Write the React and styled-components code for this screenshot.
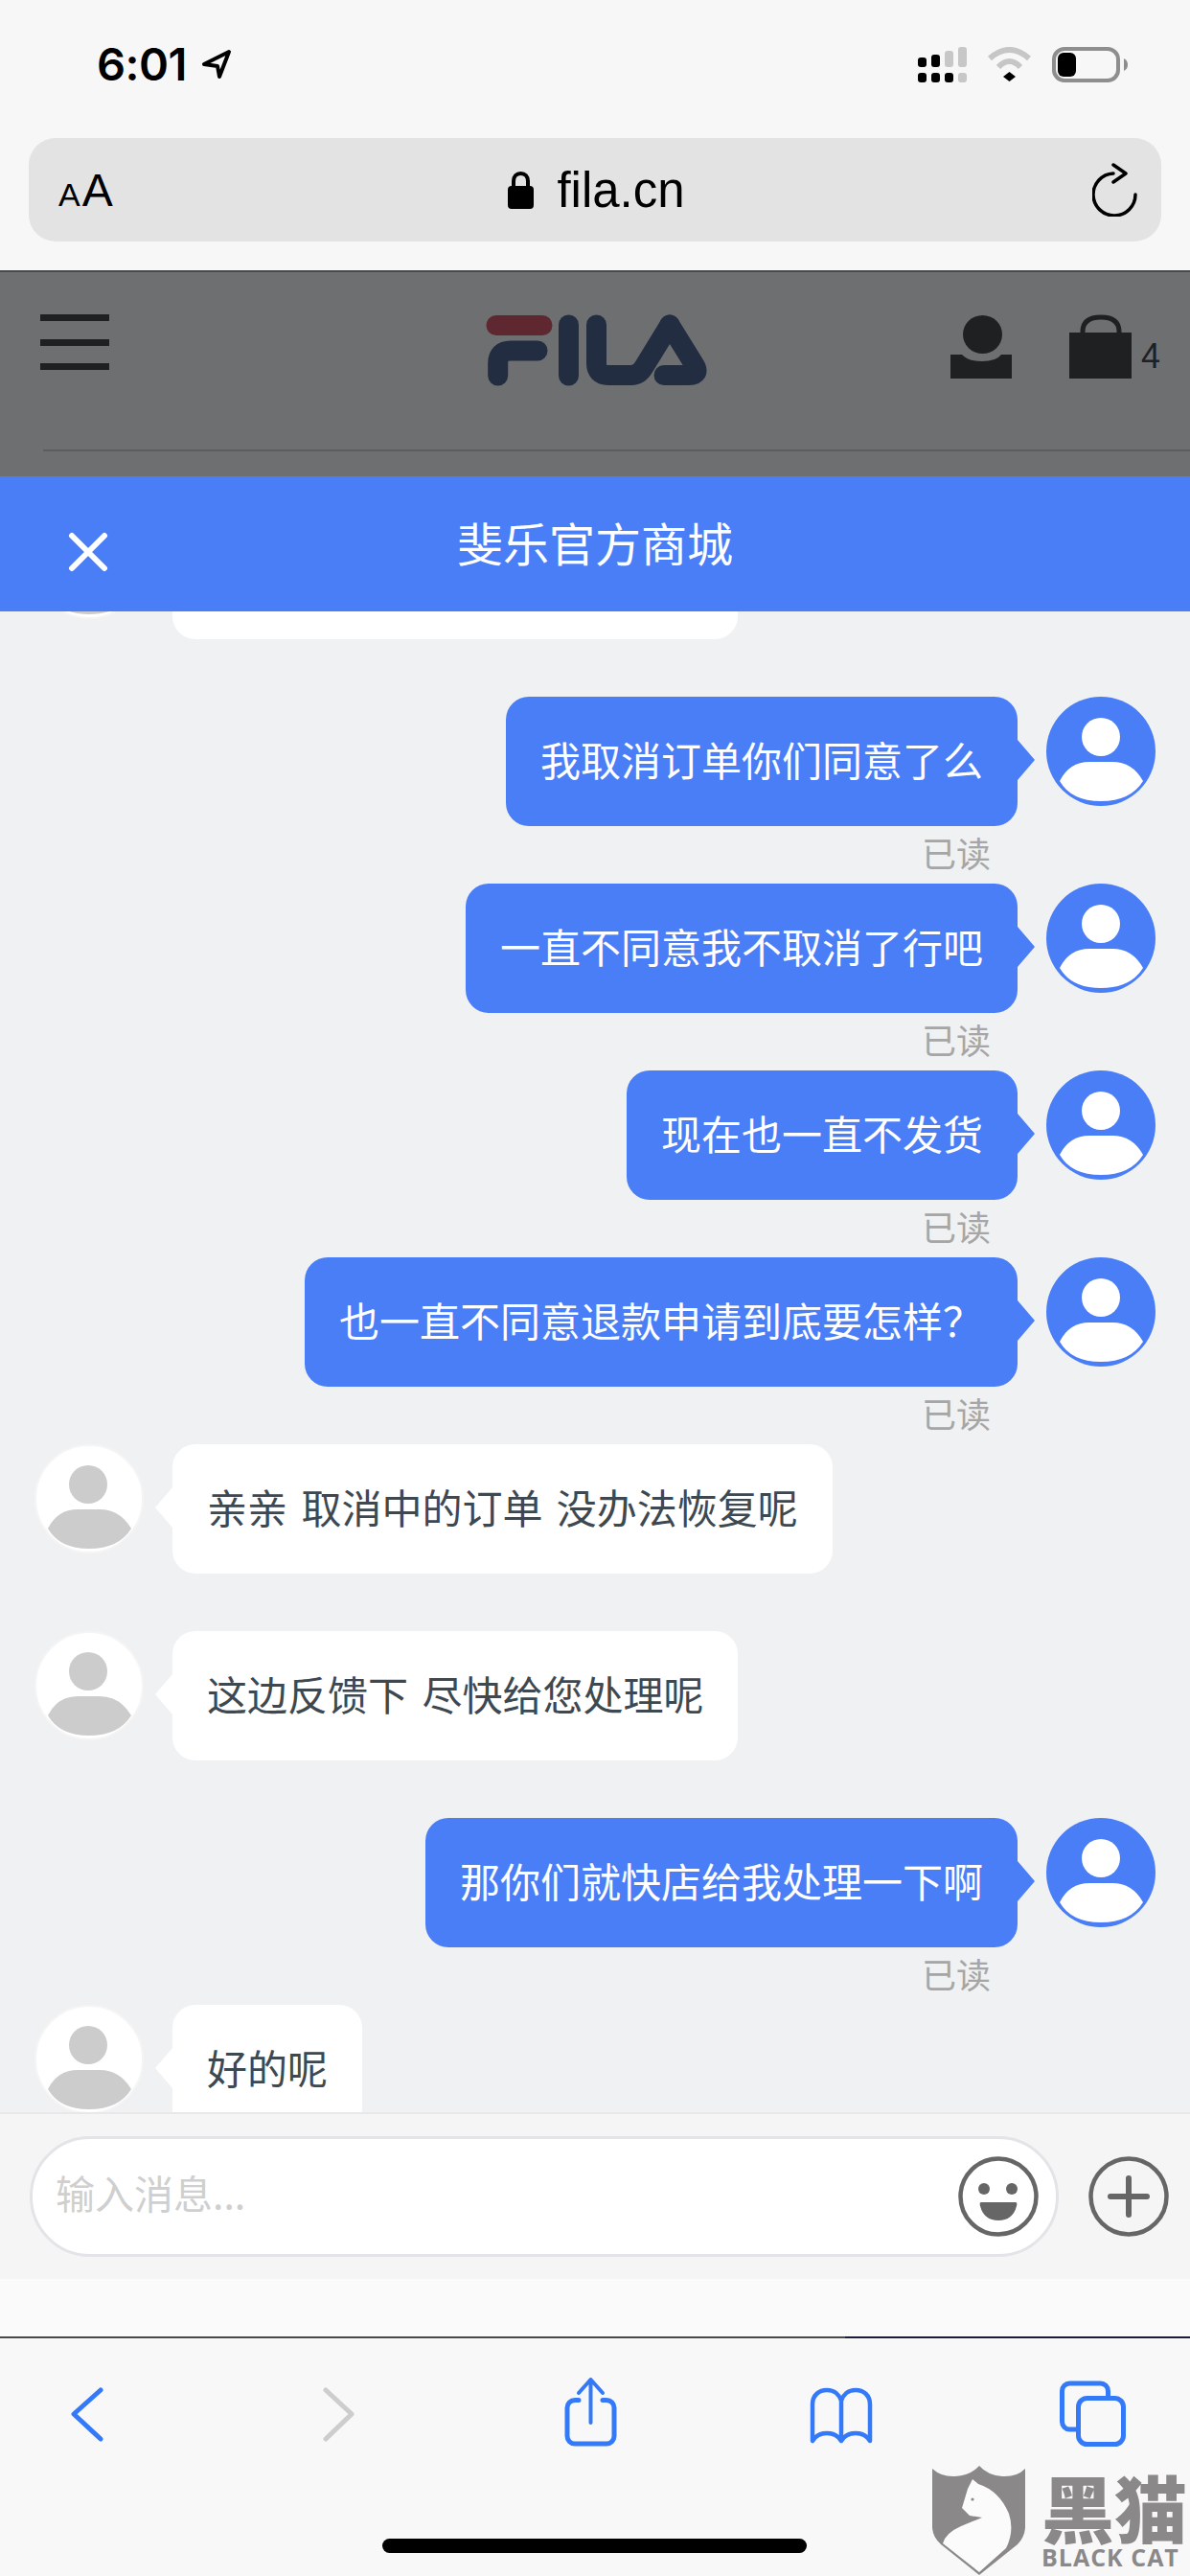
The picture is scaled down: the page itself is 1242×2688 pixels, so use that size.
import React from "react";
import styled, { createGlobalStyle } from "styled-components";

const CJK = `"Noto Sans CJK SC", "Noto Sans", sans-serif`;
const BLUE = "#4a7ef6";
const TOOL = "#347af8";
const DARK = "#1f2022";

const Global = createGlobalStyle`
  html, body { margin: 0; padding: 0; background: #f8f8f8; }
  * { box-sizing: border-box; }
`;

const Page = styled.div`
  position: relative;
  width: 1242px;
  height: 2688px;
  overflow: hidden;
  display: flex;
  flex-direction: column;
  font-family: ${CJK};
`;

/* Safari chrome */
const SafariBar = styled.header`
  height: 284px;
  flex: none;
  padding-top: 48px;
  background: #f7f7f7;
  border-bottom: 2px solid #48494b;
`;
const StatusRow = styled.div`
  height: 38px;
  padding: 0 65px 0 101px;
  display: flex;
  align-items: center;
  justify-content: space-between;
`;
const TimeGroup = styled.div`
  display: flex;
  align-items: center;
  gap: 15px;
`;
const Time = styled.span`
  font-family: Inter, sans-serif;
  font-weight: 600;
  font-size: 47px;
  line-height: 38px;
  letter-spacing: -0.5px;
  color: #000;
`;
const StatusIcons = styled.div`
  display: flex;
  align-items: center;
  gap: 21px;
`;
const AddressBar = styled.div`
  margin: 58px 30px 0;
  height: 108px;
  padding: 0 24px 0 31px;
  border-radius: 28px;
  background: #e3e3e3;
  display: grid;
  grid-template-columns: 1fr auto 1fr;
  align-items: center;
`;
const TextSize = styled.div`
  display: flex;
  align-items: baseline;
  gap: 2px;
  font-family: "Liberation Sans", sans-serif;
  color: #000;
  line-height: 1;
  margin-top: 2px;
`;
const SmallA = styled.span`font-size: 34px;`;
const BigA = styled.span`font-size: 48px;`;
const UrlGroup = styled.div`
  display: flex;
  align-items: center;
  gap: 24px;
  margin-right: 4px;
`;
const Url = styled.span`
  font-family: "Liberation Sans", sans-serif;
  font-size: 51px;
  line-height: 1;
  color: #000;
`;
const Reload = styled.svg`
  justify-self: end;
  display: block;
`;

/* Dimmed site nav */
const SiteNav = styled.div`
  height: 213px;
  flex: none;
  background: #6e6f71;
  padding: 44px 0 0 42px;
  display: flex;
  flex-direction: column;
`;
const NavRow = styled.div`
  height: 76px;
  display: flex;
  align-items: flex-start;
`;
const Hamburger = styled.div`
  width: 72px;
  height: 58px;
  display: flex;
  flex-direction: column;
  justify-content: space-between;
`;
const HamburgerBar = styled.span`
  display: block;
  height: 7px;
  background: ${DARK};
`;
const Logo = styled.svg`
  margin-left: 393px;
  display: block;
`;
const UserIcon = styled.svg`
  margin-left: 253px;
  margin-top: 1px;
  display: block;
`;
const BagIcon = styled.svg`
  margin-left: 60px;
  margin-top: 0;
  display: block;
`;
const BagCount = styled.span`
  margin-left: 10px;
  margin-top: 24px;
  font-family: "Liberation Sans", sans-serif;
  font-size: 36px;
  line-height: 40px;
  color: ${DARK};
`;
const NavRule = styled.div`
  margin: 65px 0 0 3px;
  height: 2px;
  background: #5c5d5f;
`;

/* Chat title */
const ChatHeader = styled.div`
  height: 141px;
  flex: none;
  position: relative;
  z-index: 1;
  background: ${BLUE};
  padding: 0 71px;
  display: grid;
  grid-template-columns: 1fr auto 1fr;
  align-items: center;
`;
const CloseIcon = styled.svg`
  display: block;
  margin-top: 16px;
`;
const ChatTitle = styled.div`
  font-size: 48px;
  line-height: 60px;
  margin-top: -6px;
  color: #fff;
`;

/* Messages */
const ChatArea = styled.main`
  flex: 1;
  min-height: 0;
  overflow: hidden;
  background: #f0f1f3;
`;
const ScrolledList = styled.div`
  margin-top: -106px;
`;
const MessageGroup = styled.div`
  height: 195px;
`;
const Row = styled.div`
  height: 135px;
  display: flex;
  gap: 30px;
  align-items: flex-start;
  justify-content: ${(p) => (p.$mine ? "flex-end" : "flex-start")};
  padding: ${(p) => (p.$mine ? "0 36px 0 0" : "0 0 0 36px")};
`;
const Bubble = styled.div`
  position: relative;
  height: 135px;
  min-width: ${(p) => p.$minWidth || 0}px;
  padding: 0 36px 6px;
  border-radius: 24px;
  display: flex;
  align-items: center;
  font-size: 42px;
  line-height: 60px;
  white-space: pre;
  word-spacing: 5px;
  background: ${(p) => (p.$mine ? BLUE : "#fff")};
  color: ${(p) => (p.$mine ? "#fff" : "#3d4850")};
  &::after {
    content: "";
    position: absolute;
    top: 45px;
    width: 0;
    height: 0;
    border-top: 21px solid transparent;
    border-bottom: 21px solid transparent;
    ${(p) =>
      p.$mine
        ? `left: 100%; border-left: 18px solid ${BLUE};`
        : `right: 100%; border-right: 18px solid #fff;`}
  }
`;
const Avatar = styled.svg`
  flex: none;
  display: block;
`;
const ReadMark = styled.div`
  margin-top: 5px;
  padding-right: 208px;
  text-align: right;
  font-size: 36px;
  line-height: 44px;
  color: #a6a6a6;
`;

/* Composer */
const Composer = styled.div`
  height: 174px;
  flex: none;
  background: #f5f5f5;
  border-top: 2px solid #e8e8e8;
  padding-left: 31px;
  display: flex;
  align-items: center;
  gap: 31px;
`;
const InputField = styled.div`
  width: 1074px;
  height: 126px;
  border: 3px solid #e3e3e8;
  border-radius: 63px;
  background: #fff;
  padding: 0 18px 0 24px;
  display: flex;
  align-items: center;
  justify-content: space-between;
`;
const Placeholder = styled.span`
  font-size: 41px;
  line-height: 50px;
  color: #cfcfcf;
  margin-top: -10px;
`;
const RoundIcon = styled.svg`
  display: block;
  flex: none;
`;
const Spacer = styled.div`
  height: 62px;
  flex: none;
  background: #fafafa;
  border-bottom: 2px solid;
  border-image: linear-gradient(90deg, #48494b 71%, #1a1c3a 71%) 1;
`;

/* Safari toolbar */
const Toolbar = styled.nav`
  height: 248px;
  flex: none;
  background: #f8f8f8;
  padding-top: 39px;
  display: flex;
  flex-direction: column;
`;
const ToolIcons = styled.div`
  padding: 0 62px 0 51px;
  display: flex;
  justify-content: space-between;
`;
const ToolIcon = styled.svg`
  display: block;
  fill: none;
  stroke: ${(p) => (p.$disabled ? "#cdcdcd" : TOOL)};
  stroke-width: 5;
  stroke-linecap: round;
  stroke-linejoin: round;
`;
const HomeBar = styled.div`
  width: 443px;
  height: 15px;
  margin: 90px 0 0 399px;
  border-radius: 8px;
  background: #000;
`;

/* Watermark */
const Watermark = styled.div`
  position: absolute;
  left: 973px;
  top: 2573px;
  display: flex;
  gap: 17px;
  z-index: 2;
`;
const WatermarkText = styled.div`
  display: flex;
  flex-direction: column;
  width: 152px;
  color: #8a8888;
  padding-top: 2px;
`;
const WatermarkCn = styled.div`
  font-size: 76px;
  font-weight: 900;
  line-height: 80px;
  white-space: nowrap;
`;
const WatermarkEn = styled.div`
  font-family: "Open Sans", "Liberation Sans", sans-serif;
  font-weight: 700;
  font-size: 25px;
  line-height: 26px;
  white-space: nowrap;
  letter-spacing: 1px;
`;

const SignalIcon = () => (
  <svg width="51" height="37" viewBox="0 0 51 37" style={{ display: "block" }}>
    <g fill="#000">
      <rect x="0" y="11" width="9" height="10" rx="3" />
      <rect x="14" y="8" width="9" height="13" rx="3" />
      <rect x="0" y="27" width="9" height="10" rx="3" />
      <rect x="14" y="27" width="9" height="10" rx="3" />
      <rect x="28" y="27" width="9" height="10" rx="3" />
    </g>
    <g fill="#c7c7c7">
      <rect x="28" y="4" width="9" height="17" rx="3" />
      <rect x="42" y="0" width="9" height="21" rx="3" />
      <rect x="42" y="27" width="9" height="10" rx="3" />
    </g>
  </svg>
);

const WifiIcon = () => (
  <svg width="47" height="36" viewBox="0 0 47 36" style={{ display: "block" }}>
    <path d="M3 12Q23.5 -6 44 12" fill="none" stroke="#c6c6c6" strokeWidth="6" />
    <path d="M12 21Q23.5 9 35 21" fill="none" stroke="#c6c6c6" strokeWidth="6" />
    <path d="M17 31L23.5 26L30 31L23.5 36Z" fill="#000" />
  </svg>
);

const BatteryIcon = () => (
  <svg width="79" height="37" viewBox="0 0 79 37" style={{ display: "block" }}>
    <rect x="2" y="2" width="67" height="33" rx="11" fill="none" stroke="#8e8e8e" strokeWidth="4" />
    <rect x="6" y="6" width="19" height="25" rx="6" fill="#000" />
    <path d="M75 12Q79 14 79 18.5Q79 23 75 25Z" fill="#8e8e8e" />
  </svg>
);

const MineAvatar = () => (
  <Avatar width="114" height="114" viewBox="0 0 114 114">
    <circle cx="57" cy="57" r="57" fill={BLUE} />
    <ellipse cx="57" cy="42" rx="20" ry="20" fill="#fff" />
    <path d="M14 88Q24 68 45 68L69 68Q90 68 101 88Q88 109 57 109Q26 109 14 88Z" fill="#fff" />
  </Avatar>
);

const AgentAvatar = () => (
  <Avatar width="114" height="114" viewBox="0 0 114 114">
    <circle cx="57" cy="57" r="56" fill="#fff" stroke="#f5f5f5" strokeWidth="2" />
    <ellipse cx="56" cy="42" rx="20" ry="20" fill="#ccc" />
    <path d="M14 88Q24 68 45 68L68 68Q89 68 101 88Q88 109 57 109Q26 109 14 88Z" fill="#ccc" />
  </Avatar>
);

const Mine = ({ text }) => (
  <MessageGroup>
    <Row $mine>
      <Bubble $mine>{text}</Bubble>
      <MineAvatar />
    </Row>
    <ReadMark>已读</ReadMark>
  </MessageGroup>
);

const Agent = ({ text, minWidth }) => (
  <MessageGroup>
    <Row>
      <AgentAvatar />
      <Bubble $minWidth={minWidth}>{text}</Bubble>
    </Row>
  </MessageGroup>
);

export default function App() {
  return (
    <Page>
      <Global />
      <SafariBar>
        <StatusRow>
          <TimeGroup>
            <Time>6:01</Time>
            <svg width="32" height="32" viewBox="0 0 32 32" style={{ display: "block" }}>
              <path
                d="M29 3L3 16L17 18L19 29Z"
                fill="none"
                stroke="#000"
                strokeWidth="4"
                strokeLinejoin="round"
              />
            </svg>
          </TimeGroup>
          <StatusIcons>
            <SignalIcon />
            <WifiIcon />
            <BatteryIcon />
          </StatusIcons>
        </StatusRow>
        <AddressBar>
          <TextSize>
            <SmallA>A</SmallA>
            <BigA>A</BigA>
          </TextSize>
          <UrlGroup>
            <svg width="27" height="40" viewBox="0 0 27 40" style={{ display: "block" }}>
              <path d="M6 18V11C6 6 9 3 13.5 3S21 6 21 11V18" fill="none" stroke="#000" strokeWidth="4" />
              <rect x="0" y="16" width="27" height="24" rx="4" fill="#000" />
            </svg>
            <Url>fila.cn</Url>
          </UrlGroup>
          <Reload width="48" height="56" viewBox="0 0 48 56" fill="none" stroke="#000" strokeWidth="3.5" strokeLinecap="round" strokeLinejoin="round">
            <path d="M22 11A22 22 0 1 0 45 33" />
            <path d="M22 2L35 11L22 20" />
          </Reload>
        </AddressBar>
      </SafariBar>

      <SiteNav>
        <NavRow>
          <Hamburger>
            <HamburgerBar />
            <HamburgerBar />
            <HamburgerBar />
          </Hamburger>
          <Logo width="232" height="76" viewBox="46 27 232 76" fill="none" strokeWidth="21" strokeLinecap="round" strokeLinejoin="round">
            <path d="M57 38.5H105" stroke="#5f2730" />
            <path d="M58.7 91V78Q58.7 65 72 65H100" stroke="#222d42" />
            <path d="M132.5 38V91" stroke="#222d42" />
            <path d="M161.5 38V78Q161.5 90.5 174 90.5H198Q206 90.5 211 82L238 38" stroke="#222d42" />
            <path d="M238 38L264 80Q270 90.5 258 90.5H232" stroke="#222d42" />
          </Logo>
          <UserIcon width="64" height="66" viewBox="0 0 64 66">
            <ellipse cx="33.5" cy="20" rx="20.5" ry="20" fill={DARK} />
            <path d="M0 41H12Q18 48 33 48T53 41H64V66H0Z" fill={DARK} />
          </UserIcon>
          <BagIcon width="65" height="67" viewBox="0 0 65 67">
            <path d="M14 22V18Q14 3 33 3T52 18V22" fill="none" stroke={DARK} strokeWidth="5" />
            <rect x="0" y="19" width="65" height="48" fill={DARK} />
          </BagIcon>
          <BagCount>4</BagCount>
        </NavRow>
        <NavRule />
      </SiteNav>

      <ChatHeader>
        <CloseIcon width="42" height="42" viewBox="0 0 42 42" stroke="#fff" strokeWidth="6" strokeLinecap="round">
          <path d="M4 4L38 38M38 4L4 38" />
        </CloseIcon>
        <ChatTitle>斐乐官方商城</ChatTitle>
      </ChatHeader>

      <ChatArea>
        <ScrolledList>
          <Agent text="" minWidth={590} />
          <Mine text="我取消订单你们同意了么" />
          <Mine text="一直不同意我不取消了行吧" />
          <Mine text="现在也一直不发货" />
          <Mine text="也一直不同意退款申请到底要怎样？" />
          <Agent text="亲亲 取消中的订单 没办法恢复呢" />
          <Agent text="这边反馈下 尽快给您处理呢" />
          <Mine text="那你们就快店给我处理一下啊" />
          <Agent text="好的呢" />
        </ScrolledList>
      </ChatArea>

      <Composer>
        <InputField>
          <Placeholder>输入消息...</Placeholder>
          <RoundIcon width="84" height="84" viewBox="0 0 84 84">
            <circle cx="42" cy="42" r="39.5" fill="none" stroke="#666" strokeWidth="4.5" />
            <circle cx="27" cy="34" r="6" fill="#666" />
            <circle cx="56" cy="34" r="6" fill="#666" />
            <path d="M24 48H60Q62 48 61 52Q57 67 42 67T23 52Q22 48 24 48Z" fill="#666" />
          </RoundIcon>
        </InputField>
        <RoundIcon width="84" height="84" viewBox="0 0 84 84" fill="none" stroke="#666">
          <circle cx="42" cy="42" r="39.5" strokeWidth="4.5" />
          <path d="M23 42H61M42 23V61" strokeWidth="6" strokeLinecap="round" />
        </RoundIcon>
      </Composer>
      <Spacer />

      <Toolbar>
        <ToolIcons>
          <ToolIcon width="80" height="80" viewBox="0 0 80 80">
            <path d="M54 15L26 40L54 66" />
          </ToolIcon>
          <ToolIcon $disabled width="80" height="80" viewBox="0 0 80 80">
            <path d="M27 15L54 40L27 66" />
          </ToolIcon>
          <ToolIcon width="80" height="80" viewBox="0 0 80 80">
            <path d="M28 25.5H24a8 8 0 0 0 -8 8V63a8 8 0 0 0 8 8H57a8 8 0 0 0 8 -8V33.5a8 8 0 0 0 -8 -8H53" />
            <path d="M40.5 4V49M28 18L40.5 4L53 18" strokeWidth="4" />
          </ToolIcon>
          <ToolIcon width="80" height="80" viewBox="0 0 80 80">
            <path
              d="M10 68V30C10 20 17 15 25 15C33 15 38 20 40 26C42 20 47 15 55 15C63 15 70 20 70 30V68C67 63 62 60 55 60C48 60 43 63 40 68C37 63 32 60 25 60C18 60 13 63 10 68Z M40 26V68"
              strokeWidth="4.5"
            />
          </ToolIcon>
          <ToolIcon width="80" height="80" viewBox="0 0 80 80">
            <path d="M56.5 21V16a8 8 0 0 0 -8 -8H16.5a8 8 0 0 0 -8 8V48a8 8 0 0 0 8 8H23" />
            <rect x="25.5" y="23.5" width="47" height="48" rx="9" />
          </ToolIcon>
        </ToolIcons>
        <HomeBar />
      </Toolbar>

      <Watermark>
        <svg width="97" height="115" viewBox="0 0 97 115" style={{ display: "block", flex: "none" }}>
          <path
            d="M0 3Q10 12 24 11Q40 10 49 0Q58 10 73 11Q88 12 97 3V65Q96 75 89 82L49 114L9 82Q1 75 0 65Z"
            fill="#8a8888"
          />
          <path
            d="M42 14L48 19Q70 26 80 50Q86 68 77 86L49 111L11 81Q14 70 30 63L52 54L39 52L31 44L37 24Z"
            fill="#fbfbfb"
          />
          <circle cx="42" cy="35" r="1.6" fill="#8a8888" />
        </svg>
        <WatermarkText>
          <WatermarkCn>黑猫</WatermarkCn>
          <WatermarkEn>BLACK CAT</WatermarkEn>
        </WatermarkText>
      </Watermark>
    </Page>
  );
}
